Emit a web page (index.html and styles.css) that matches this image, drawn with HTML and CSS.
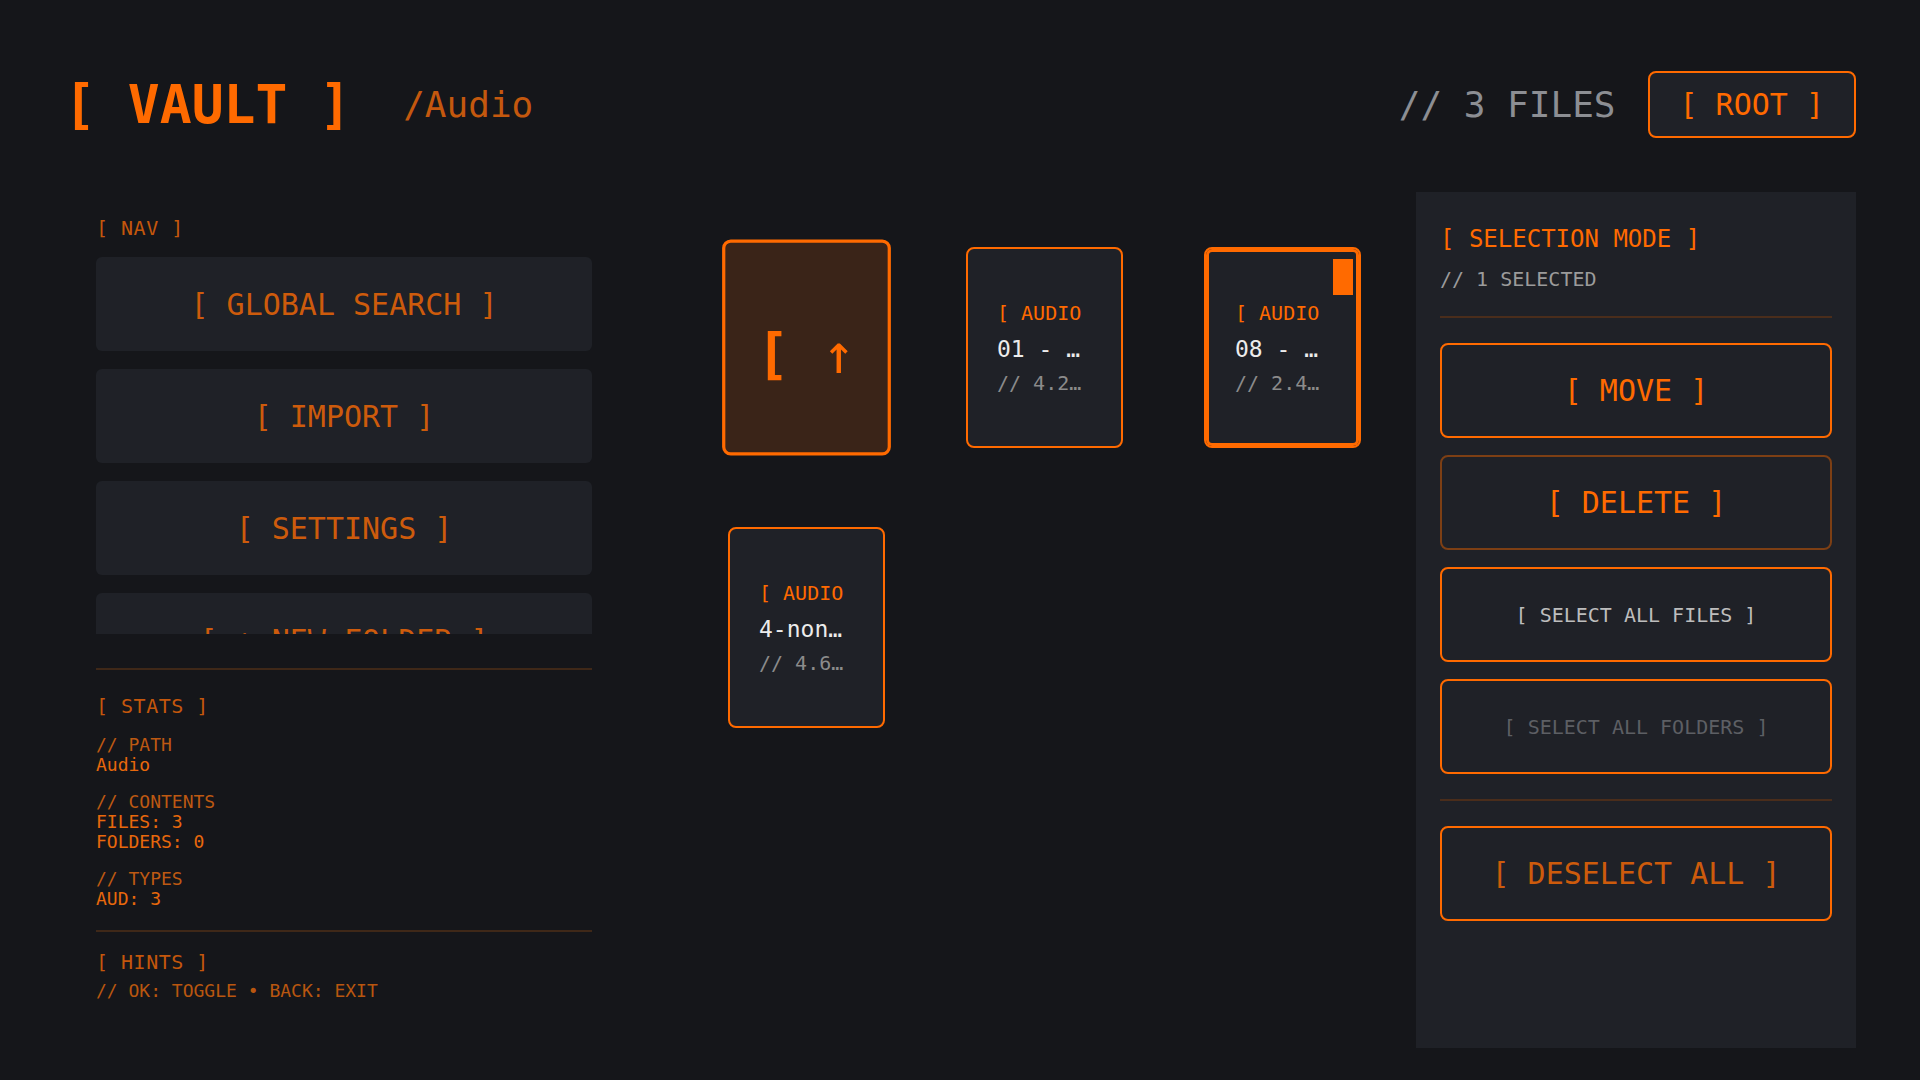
FILE: index.html
```html
<!DOCTYPE html>
<html lang="en">
<head>
  <meta charset="UTF-8" />
  <meta name="viewport" content="width=device-width, initial-scale=1.0"/>
  <title>Vault</title>
  <link rel="stylesheet" href="styles.css">
</head>

<body>
  <div class="app">
    <!-- Top bar: title, current path, file count -->
    <header class="topbar">
      <div class="brand">
        <h1>[ VAULT ]</h1>
        <span class="path">/Audio</span>
      </div>
      <div class="top-right">
        <span class="count">// 3 FILES</span>
        <div class="root-btn">[ ROOT ]</div>
      </div>
    </header>

    <div class="workspace">
      <!-- Left column: navigation, stats, hints -->
      <aside class="sidebar">
        <div class="section-label">[ NAV ]</div>
        <div class="nav-list">
          <div class="nav-btn">[ GLOBAL SEARCH ]</div>
          <div class="nav-btn">[ IMPORT ]</div>
          <div class="nav-btn">[ SETTINGS ]</div>
          <div class="nav-btn">[ + NEW FOLDER ]</div>
        </div>

        <div class="rule"></div>

        <div class="stats">
          <div class="section-label">[ STATS ]</div>
          <div class="stat-group">
            <div class="stat-key">// PATH</div>
            <div class="stat-val">Audio</div>
          </div>
          <div class="stat-group">
            <div class="stat-key">// CONTENTS</div>
            <div class="stat-val">FILES: 3</div>
            <div class="stat-val">FOLDERS: 0</div>
          </div>
          <div class="stat-group">
            <div class="stat-key">// TYPES</div>
            <div class="stat-val">AUD: 3</div>
          </div>
        </div>

        <div class="rule"></div>

        <div class="hints">
          <div class="section-label">[ HINTS ]</div>
          <div class="hint-text">// OK: TOGGLE &bull; BACK: EXIT</div>
        </div>
      </aside>

      <!-- File grid -->
      <main class="browser">
        <div class="grid">
          <div class="card up-card">
            <div class="up-text">[ <span class="arrow">&uarr;</span> ]</div>
          </div>
          <div class="card">
            <div class="card-type">[ AUDIO ]</div>
            <div class="card-name">01 - Intro.mp3</div>
            <div class="card-size">// 4.2 MB</div>
          </div>
          <div class="card selected">
            <span class="check"></span>
            <div class="card-type">[ AUDIO ]</div>
            <div class="card-name">08 - Outro.mp3</div>
            <div class="card-size">// 2.4 MB</div>
          </div>
          <div class="card">
            <div class="card-type">[ AUDIO ]</div>
            <div class="card-name">4-non-blondes.mp3</div>
            <div class="card-size">// 4.6 MB</div>
          </div>
        </div>
      </main>

      <!-- Right column: selection actions -->
      <aside class="selection">
        <div class="sel-title">[ SELECTION MODE ]</div>
        <div class="sel-count">// 1 SELECTED</div>
        <div class="rule"></div>
        <div class="actions">
          <div class="action">[ MOVE ]</div>
          <div class="action danger">[ DELETE ]</div>
          <div class="action small">[ SELECT ALL FILES ]</div>
          <div class="action small disabled">[ SELECT ALL FOLDERS ]</div>
        </div>
        <div class="rule"></div>
        <div class="action soft">[ DESELECT ALL ]</div>
      </aside>
    </div>
  </div>
</body>
</html>
```

FILE: styles.css
```css
* {
  box-sizing: border-box;
}

html, body {
  margin: 0;
  padding: 0;
}

body {
  background-color: #15161a;
  font-family: "DejaVu Sans Mono", monospace;
  color: #ff6a00;
}

.app {
  height: 1080px;
  padding: 64px 64px 32px;
  display: flex;
  flex-direction: column;
}

/* Top bar */
.topbar {
  height: 80px;
  display: flex;
  align-items: center;
  justify-content: space-between;
}

.brand {
  display: flex;
  align-items: center;
  gap: 52px;
}

.brand h1 {
  margin: 0;
  font-size: 53px;
  font-weight: bold;
  line-height: 1;
  color: #ff6a00;
}

.path {
  font-size: 36px;
  color: #c4580e;
}

.top-right {
  display: flex;
  align-items: center;
  gap: 32px;
}

.count {
  font-size: 36px;
  color: #8c8e93;
}

.root-btn {
  padding: 14px 30px;
  font-size: 30px;
  line-height: 35px;
  border: 2px solid #ff6a00;
  border-radius: 8px;
  background-color: #1f2127;
  color: #ff6a00;
}

/* Three columns */
.workspace {
  flex: 1;
  margin-top: 48px;
  display: flex;
}

.sidebar {
  width: 560px;
  padding: 24px 32px 0;
}

.section-label {
  font-size: 20px;
  line-height: 24px;
  letter-spacing: 0.5px;
  color: #c4570c;
}

.nav-list {
  margin-top: 17px;
  height: 377px;
  overflow: hidden;
  display: flex;
  flex-direction: column;
  gap: 18px;
}

.nav-btn {
  flex: none;
  height: 94px;
  display: flex;
  align-items: center;
  justify-content: center;
  background-color: #1f2127;
  border-radius: 6px;
  font-size: 30px;
  color: #cd5b0c;
}

.rule {
  height: 2px;
  background-color: #3f2818;
}

.sidebar .rule {
  margin-top: 34px;
}

.stats {
  padding-top: 24px;
}

.stats + .rule {
  margin-top: 21px;
}

.stat-group {
  margin-top: 17px;
  font-size: 18px;
  line-height: 20px;
}

.stat-group:first-of-type {
  margin-top: 15px;
}

.stat-key {
  color: #bd5912;
}

.stat-val {
  color: #e8680c;
}

.hints {
  padding-top: 18px;
}

.hint-text {
  margin-top: 6px;
  font-size: 18px;
  line-height: 22px;
  color: #b9560f;
}

/* File grid */
.browser {
  flex: 1;
  padding: 55px 0 0 104px;
}

.grid {
  display: grid;
  grid-template-columns: repeat(3, 157px);
  grid-auto-rows: 201px;
  column-gap: 81px;
  row-gap: 79px;
}

.card {
  position: relative;
  display: flex;
  flex-direction: column;
  justify-content: center;
  padding: 0 29px;
  background-color: #1f2127;
  border: 2px solid #ff6a00;
  border-radius: 8px;
}

.card-type,
.card-name,
.card-size {
  white-space: nowrap;
  overflow: hidden;
}

.card-type {
  font-size: 20px;
  line-height: 24px;
  color: #ff6a00;
}

.card-name {
  margin-top: 10px;
  font-size: 23px;
  line-height: 28px;
  color: #ececec;
  text-overflow: ellipsis;
}

.card-size {
  margin-top: 8px;
  font-size: 20px;
  line-height: 24px;
  color: #8b8b8b;
  text-overflow: ellipsis;
}

.up-card {
  transform: scale(1.075);
  border-width: 3px;
  background-color: #3a2418;
  padding-top: 12px;
}

.up-text {
  white-space: nowrap;
  overflow: hidden;
  font-size: 51px;
  font-weight: bold;
  color: #ff6a00;
}

.up-text .arrow {
  font-weight: normal;
}

.card.selected {
  box-shadow: inset 0 0 0 3px #ff6a00;
}

.check {
  position: absolute;
  top: 10px;
  right: 6px;
  width: 20px;
  height: 36px;
  background-color: #ff6a00;
}

/* Selection panel */
.selection {
  width: 440px;
  padding: 33px 24px 30px;
  background-color: #1f2127;
}

.sel-title {
  font-size: 24px;
  line-height: 28px;
  color: #ff6a00;
}

.sel-count {
  margin-top: 14px;
  font-size: 20px;
  line-height: 24px;
  color: #9b9b9b;
}

.selection .rule {
  margin: 25px 0;
  height: 2px;
  background-color: #4a2d1b;
}

.actions {
  display: flex;
  flex-direction: column;
  gap: 17px;
}

.action {
  height: 95px;
  display: flex;
  align-items: center;
  justify-content: center;
  border: 2px solid #ff6a00;
  border-radius: 8px;
  font-size: 30px;
  color: #ff6a00;
}

.action.danger {
  border-color: #7d3f14;
}

.action.small {
  font-size: 20px;
  color: #bdbdbd;
}

.action.disabled {
  color: #5d5f64;
}

.action.soft {
  color: #cd5b0c;
}
```
